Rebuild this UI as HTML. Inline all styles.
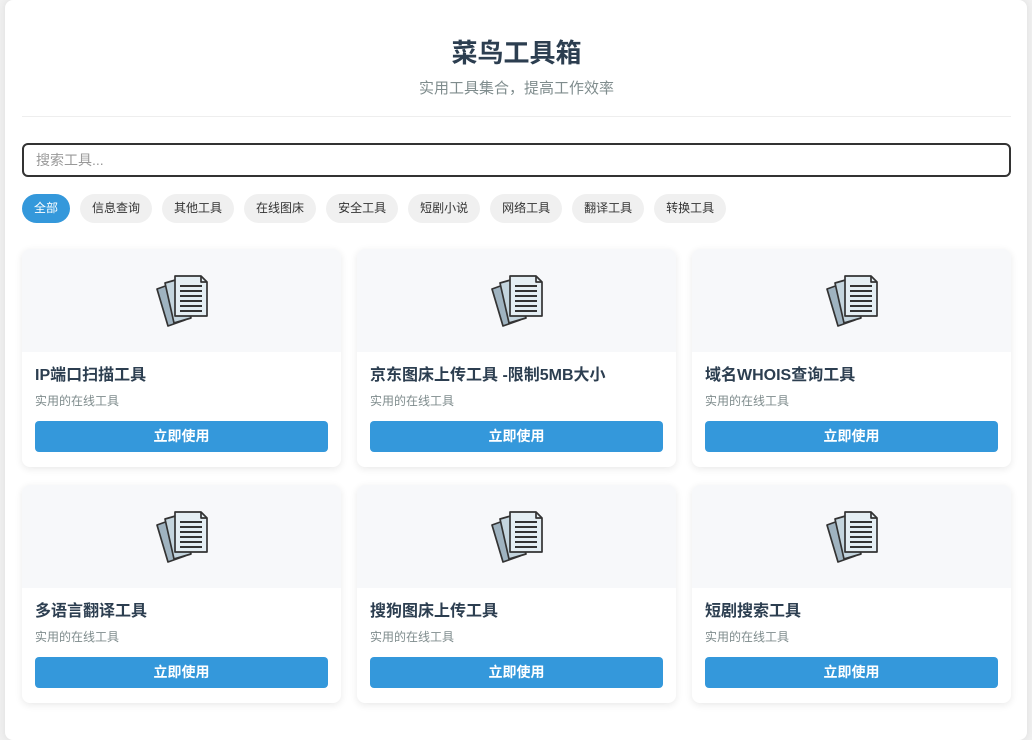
<!DOCTYPE html>
<html><head><meta charset="utf-8"><style>
*{box-sizing:border-box;margin:0;padding:0}
body{width:1032px;height:717px;overflow:hidden;background:#f0f0f0;font-family:"Liberation Sans","Noto Sans CJK SC",sans-serif}
.wrap{position:absolute;left:5px;top:0;width:1022px;height:740px;background:#fff;border-radius:8px;box-shadow:0 0 8px rgba(0,0,0,.08);padding:0 16px 0 17px}
h1{text-align:center;font-size:26px;color:#2c3e50;font-weight:bold;padding-top:35px;line-height:36px}
.sub{text-align:center;color:#7f8c8d;font-size:15px;margin-top:8px;line-height:20px}
hr{border:0;border-top:1px solid #eee;margin-top:17px}
.search{margin-top:26px;height:34px;border:2px solid #333;border-radius:6px;padding:0 12px;font-size:14px;color:#999;line-height:30px}
.filters{margin-top:17px;display:flex;gap:10px}
.filters span{height:29px;line-height:29px;border-radius:15px;background:#f0f0f0;font-size:12px;color:#333;padding:0 12px}
.filters span.on{background:#3498db;color:#fff}
.grid{margin-top:26px;display:grid;grid-template-columns:319px 319px 319px;column-gap:16px;row-gap:18px}
.card{height:218px;border-radius:8px;box-shadow:0 2px 8px rgba(0,0,0,.09);overflow:hidden;background:#fff}
.img{height:103px;background:#f7f8fa;display:flex;align-items:center;justify-content:center}
.t{font-size:16px;font-weight:bold;color:#2c3e50;margin:14px 13px 0;line-height:20px}
.d{font-size:12px;color:#7f8c8d;margin:7px 13px 0;line-height:16px}
.b{margin:12px 13px 0;height:31px;background:#3498db;color:#fff;border-radius:4px;text-align:center;line-height:31px;font-size:14px;font-weight:bold}
</style></head><body><div class="wrap">
<h1>菜鸟工具箱</h1>
<div class="sub">实用工具集合，提高工作效率</div>
<hr>
<div class="search">搜索工具...</div>
<div class="filters"><span class="on">全部</span><span>信息查询</span><span>其他工具</span><span>在线图床</span><span>安全工具</span><span>短剧小说</span><span>网络工具</span><span>翻译工具</span><span>转换工具</span></div>
<svg width="0" height="0" style="position:absolute"><defs><g id="ic" stroke="#333" stroke-width="1.7" stroke-linejoin="round"><path d="M2 15 L16 10 L30 46 L13 52 Z" fill="#9fb3c0"/><path d="M10 9 L24 5 L36 44 L19 49 Z" fill="#c4d5de"/><path d="M20 2 H46 L52 8 V42 H20 Z" fill="#e4eef3"/><path d="M46 2 V8 H52" fill="none"/><path d="M25 12H47M25 17H47M25 22H47M25 27H47M25 32H47M25 37H47" stroke-width="1.9"/></g></defs></svg>
<div class="grid">
<div class="card"><div class="img"><svg width="54" height="54" viewBox="0 0 54 54"><use href="#ic"/></svg></div><div class="t">IP端口扫描工具</div><div class="d">实用的在线工具</div><div class="b">立即使用</div></div>
<div class="card"><div class="img"><svg width="54" height="54" viewBox="0 0 54 54"><use href="#ic"/></svg></div><div class="t">京东图床上传工具 -限制5MB大小</div><div class="d">实用的在线工具</div><div class="b">立即使用</div></div>
<div class="card"><div class="img"><svg width="54" height="54" viewBox="0 0 54 54"><use href="#ic"/></svg></div><div class="t">域名WHOIS查询工具</div><div class="d">实用的在线工具</div><div class="b">立即使用</div></div>
<div class="card"><div class="img"><svg width="54" height="54" viewBox="0 0 54 54"><use href="#ic"/></svg></div><div class="t">多语言翻译工具</div><div class="d">实用的在线工具</div><div class="b">立即使用</div></div>
<div class="card"><div class="img"><svg width="54" height="54" viewBox="0 0 54 54"><use href="#ic"/></svg></div><div class="t">搜狗图床上传工具</div><div class="d">实用的在线工具</div><div class="b">立即使用</div></div>
<div class="card"><div class="img"><svg width="54" height="54" viewBox="0 0 54 54"><use href="#ic"/></svg></div><div class="t">短剧搜索工具</div><div class="d">实用的在线工具</div><div class="b">立即使用</div></div>
</div></div>
</body></html>
